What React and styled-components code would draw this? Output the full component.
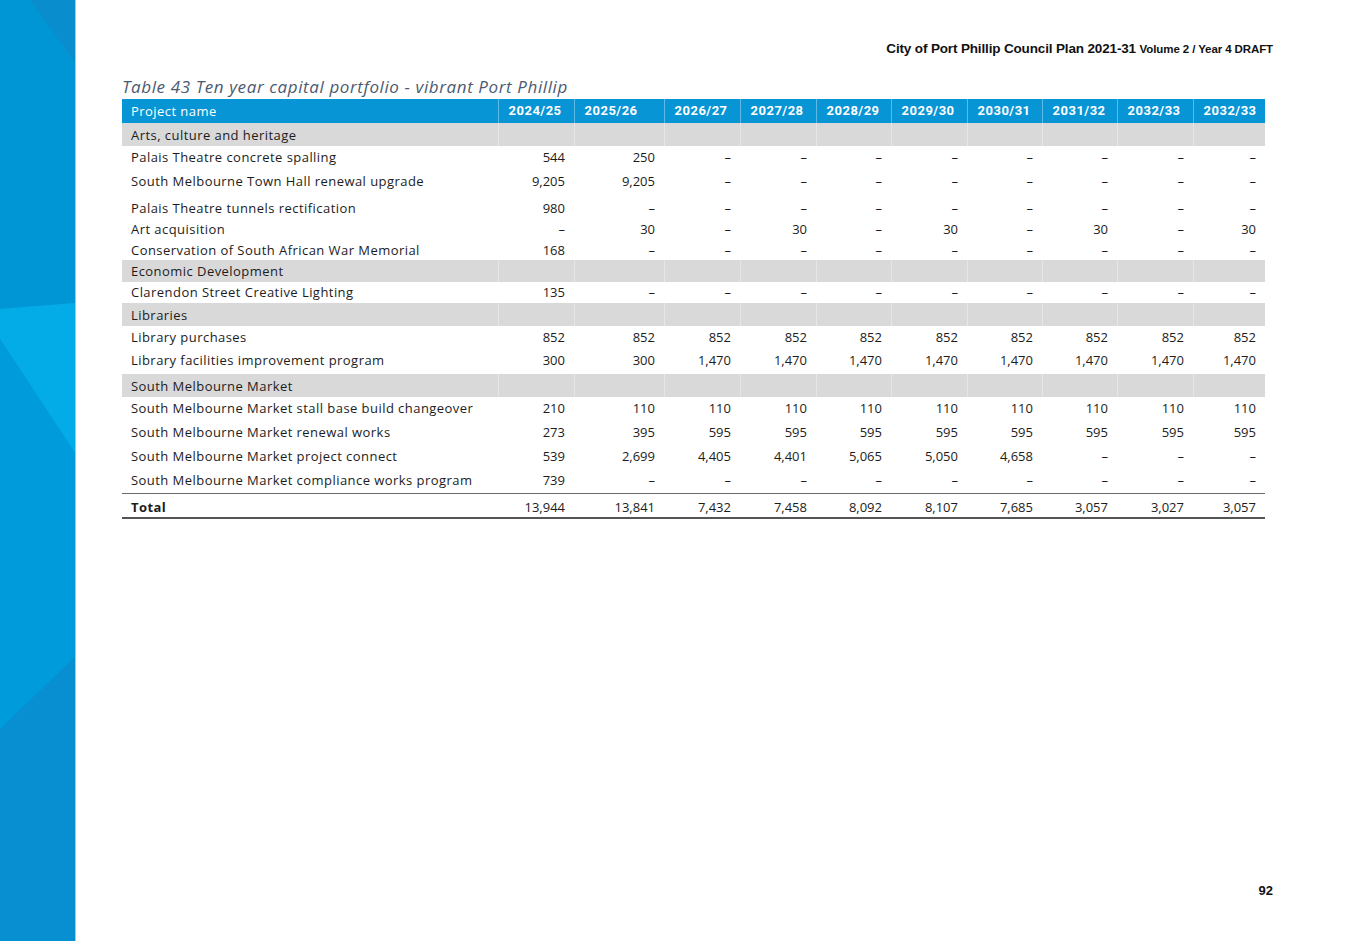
import React from 'react';
import styled, { createGlobalStyle } from 'styled-components';

const GlobalStyle = createGlobalStyle`
  html, body { margin: 0; padding: 0; background: #fff; }
  body { font-family: "Open Sans", "Liberation Sans", sans-serif; }
`;

const years = ['2024/25', '2025/26', '2026/27', '2027/28', '2028/29', '2029/30', '2030/31', '2031/32', '2032/33', '2032/33'];
const widths = [376, 76, 90, 76, 76, 75, 76, 75, 75, 76, 72];

const DASH = '–';
const d = n => Array(n).fill(DASH);

const rows = [
  { group: 'Arts, culture and heritage', h: 23, pt: 4 },
  { name: 'Palais Theatre concrete spalling', v: ['544', '250', ...d(8)], h: 23, pt: 3 },
  { name: 'South Melbourne Town Hall renewal upgrade', v: ['9,205', '9,205', ...d(8)], h: 28, pt: 4 },
  { name: 'Palais Theatre tunnels rectification', v: ['980', ...d(9)], h: 22, pt: 3 },
  { name: 'Art acquisition', v: [DASH, '30', DASH, '30', DASH, '30', DASH, '30', DASH, '30'], h: 21, pt: 2 },
  { name: 'Conservation of South African War Memorial', v: ['168', ...d(9)], h: 20, pt: 2 },
  { group: 'Economic Development', h: 22, pt: 3 },
  { name: 'Clarendon Street Creative Lighting', v: ['135', ...d(9)], h: 21, pt: 2 },
  { group: 'Libraries', h: 23, pt: 4 },
  { name: 'Library purchases', v: Array(10).fill('852'), h: 22, pt: 3 },
  { name: 'Library facilities improvement program', v: ['300', '300', ...Array(8).fill('1,470')], h: 26, pt: 4 },
  { group: 'South Melbourne Market', h: 23, pt: 4 },
  { name: 'South Melbourne Market stall base build changeover', v: ['210', ...Array(9).fill('110')], h: 23, pt: 3 },
  { name: 'South Melbourne Market renewal works', v: ['273', '395', ...Array(8).fill('595')], h: 24, pt: 4 },
  { name: 'South Melbourne Market project connect', v: ['539', '2,699', '4,405', '4,401', '5,065', '5,050', '4,658', ...d(3)], h: 24, pt: 4 },
  { name: 'South Melbourne Market compliance works program', v: ['739', ...d(9)], h: 25, pt: 4 },
];

const total = ['13,944', '13,841', '7,432', '7,458', '8,092', '8,107', '7,685', '3,057', '3,027', '3,057'];

function App() {
  return (
    <Page>
      <GlobalStyle />
      <Sidebar>
        <svg width="75" height="941" viewBox="0 0 75 941" preserveAspectRatio="none">
          <rect x="0" y="0" width="75" height="941" fill="#0099d9" />
          <polygon points="30,0 75,0 75,63" fill="#0a8dcc" />
          <polygon points="0,0 30,0 75,63 75,303 0,309" fill="#0096d6" />
          <polygon points="0,309 75,303 75,453 0,339" fill="#04ace7" />
          <polygon points="0,339 75,453 75,657 0,729" fill="#009bdb" />
          <polygon points="0,729 75,657 75,941 0,941" fill="#078fd2" />
        </svg>
      </Sidebar>
      <Main>
        <DocHeader>
          City of Port Phillip Council Plan 2021-31 <small>Volume 2 / Year 4 DRAFT</small>
        </DocHeader>
        <Caption>Table 43 Ten year capital portfolio - vibrant Port Phillip</Caption>
        <Table>
          <colgroup>
            {widths.map((w, i) => <col key={i} style={{ width: w }} />)}
          </colgroup>
          <thead>
            <tr>
              <HeadCell $name>Project name</HeadCell>
              {years.map((y, i) => <HeadCell key={i}>{y}</HeadCell>)}
            </tr>
          </thead>
          <tbody>
            {rows.map((r, i) => r.group ? (
              <GroupRow key={i} $h={r.h}>
                <Cell $pt={r.pt}>{r.group}</Cell>
                {years.map((_, j) => <Cell key={j} $pt={r.pt} />)}
              </GroupRow>
            ) : (
              <Row key={i} $h={r.h}>
                <Cell $pt={r.pt}>{r.name}</Cell>
                {r.v.map((v, j) => <Cell key={j} $pt={r.pt} $num>{v}</Cell>)}
              </Row>
            ))}
            <TotalRow $h={25}>
              <Cell $pt={5} $bold>Total</Cell>
              {total.map((v, j) => <Cell key={j} $pt={5} $num>{v}</Cell>)}
            </TotalRow>
          </tbody>
        </Table>
        <PageNumber>92</PageNumber>
      </Main>
    </Page>
  );
}

const Page = styled.div`
  display: flex;
  width: 1347px;
  height: 941px;
  overflow: hidden;
`;

const Sidebar = styled.div`
  width: 75px;
  flex: none;
  height: 941px;
  border-right: 1px solid #8dd2f3;
  svg { display: block; }
`;

const Main = styled.div`
  flex: 1;
  display: flex;
  flex-direction: column;
  padding: 42px 74px 42px 46px;
`;

const DocHeader = styled.div`
  align-self: flex-end;
  font-family: "Liberation Sans", Arial, sans-serif;
  font-weight: bold;
  font-size: 13.5px;
  letter-spacing: -0.15px;
  color: #111;
  line-height: 14px;
  small {
    font-size: 11.5px;
    letter-spacing: -0.1px;
  }
`;

const Caption = styled.div`
  margin-top: 21px;
  font-style: italic;
  font-weight: 400;
  font-size: 17px;
  letter-spacing: 0.6px;
  color: #4b5a70;
  line-height: 20px;
  height: 22px;
  white-space: nowrap;
`;

const Table = styled.table`
  width: 1143px;
  border-collapse: collapse;
  table-layout: fixed;
  font-size: 13px;
  color: #1c1c1c;
`;

const HeadCell = styled.th`
  background: #0795d6;
  color: #fff;
  height: 24px;
  padding: 0 0 0 ${p => (p.$name ? 9 : 10)}px;
  text-align: left;
  font-family: ${p => (p.$name ? '"Open Sans", sans-serif' : 'Roboto, sans-serif')};
  font-weight: ${p => (p.$name ? 400 : 700)};
  font-size: 13px;
  letter-spacing: ${p => (p.$name ? 0.45 : 0.5)}px;
  line-height: 16px;
  box-sizing: border-box;
  border-left: 1px solid rgba(255, 255, 255, 0.35);
  &:first-child { border-left: none; }
  white-space: nowrap;
`;

const Row = styled.tr`
  height: ${p => p.$h}px;
`;

const GroupRow = styled(Row)`
  background: #d9d9d9;
  td + td { border-left: 1px solid #e6e6e6; }
`;

const TotalRow = styled(Row)`
  border-top: 1px solid #6a6a6a;
  border-bottom: 2px solid #555;
`;

const Cell = styled.td`
  vertical-align: top;
  padding: ${p => p.$pt}px ${p => (p.$num ? 9 : 0)}px 0 ${p => (p.$num ? 0 : 9)}px;
  text-align: ${p => (p.$num ? 'right' : 'left')};
  font-weight: ${p => (p.$bold ? 700 : 400)};
  letter-spacing: ${p => (p.$num ? 0 : 0.45)}px;
  line-height: 16px;
  white-space: nowrap;
`;

const PageNumber = styled.div`
  margin-top: auto;
  align-self: flex-end;
  font-family: "Liberation Sans", Arial, sans-serif;
  font-weight: bold;
  font-size: 13px;
  line-height: 16px;
  color: #111;
`;

export default App;
